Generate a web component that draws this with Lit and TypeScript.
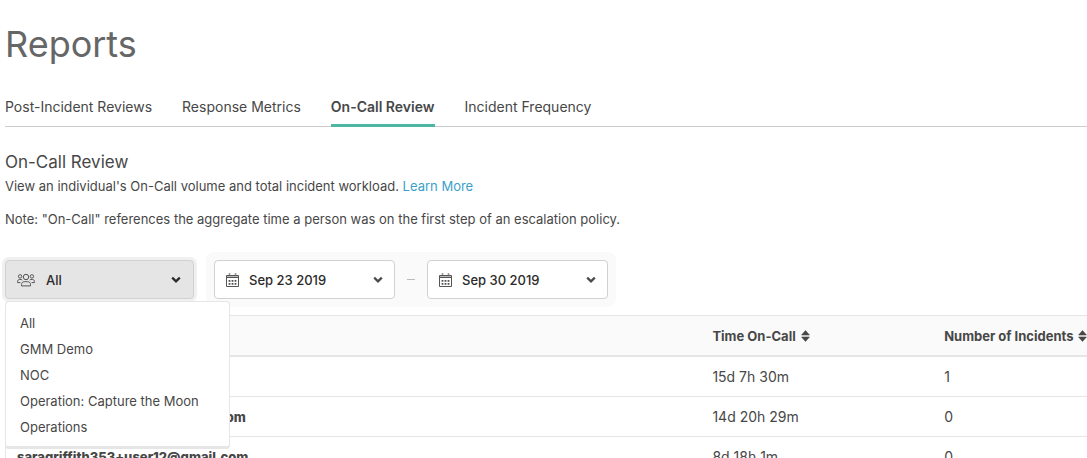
import { LitElement, html, css, svg } from "lit";
import { customElement, property, state } from "lit/decorators.js";
import { classMap } from "lit/directives/class-map.js";

const chevron = html`<svg class="chevron" width="10" height="8" viewBox="0 0 10 8" aria-hidden="true">
  <path d="M1.2 1.6 5 5.4 8.8 1.6" fill="none" stroke="currentColor" stroke-width="2.2" />
</svg>`;

const teamIcon = html`<svg width="18" height="14" viewBox="0 0 18 14" fill="none" stroke="currentColor" aria-hidden="true">
  <circle cx="9" cy="4" r="2.7" />
  <path d="M4.5 12.9v-1.3c0-1.8 1.2-2.9 2.8-2.9h3.4c1.6 0 2.8 1.1 2.8 2.9v1.3z" />
  <circle cx="3.1" cy="3.4" r="1.7" />
  <circle cx="14.9" cy="3.4" r="1.7" />
  <path d="M.6 9.6V8.4c0-1.2.8-1.9 1.9-1.9h1.8l1 .5M.6 9.6h2.8M17.4 9.6V8.4c0-1.2-.8-1.9-1.9-1.9h-1.8l-1 .5M17.4 9.6h-2.8" />
</svg>`;

const dots = [3, 6, 9].flatMap((x) => [7, 10].map((y) => [x, y]));

const calendarIcon = html`<svg width="13" height="14" viewBox="0 0 13 14" aria-hidden="true">
  <path d="M.5 2.5h12v11H.5zM.5 4.5h12" fill="none" stroke="currentColor" />
  <path d="M1 3.5h11" stroke="currentColor" opacity=".4" />
  <path d="M3.5 0v3M9.5 0v3" stroke="currentColor" stroke-width="1.6" opacity=".6" />
  ${dots.map(([x, y]) => svg`<rect x=${x - 0.4} y=${y} width="1.8" height="1.8" fill="currentColor" />`)}
</svg>`;

const sortIcon = html`<svg width="9" height="12" viewBox="0 0 9 12" aria-hidden="true">
  <path d="M4.5.6 8.4 5H.6zM4.5 11.4 8.4 7H.6z" fill="currentColor" stroke="currentColor" stroke-width=".6" stroke-linejoin="round" />
</svg>`;

@customElement("team-picker")
class TeamPicker extends LitElement {
  @property({ type: Array }) teams: string[] = [];
  @state() private selected = "All";
  @state() private open = true;

  static styles = css`
    :host { display: block; position: relative; }
    button { font: inherit; text-align: left; cursor: pointer; }
    .trigger {
      display: flex; align-items: center; box-sizing: border-box;
      width: 189px; height: 39px; padding: 0 12px 0 11px;
      border: 1px solid #d1d1d1; border-radius: 4px;
      background: #e5e5e5; color: #2b2b2b;
      box-shadow: 0 0 0 3px #f0f0f0;
    }
    .trigger svg { flex: none; color: #555; }
    .trigger .chevron { color: #2b2b2b; }
    .value { flex: 1; margin-left: 11px; font-weight: 500; }
    .menu {
      position: absolute; z-index: 2; top: 41px; left: 0;
      box-sizing: border-box; width: 225px; margin: 0; padding: 8px 0 6px;
      list-style: none; background: #fff;
      border: 1px solid #e6e6e6; border-bottom-width: 3px; border-radius: 4px;
    }
    .item {
      display: block; width: 100%; height: 26px; padding: 0 14px;
      border: 0; background: none; color: inherit;
    }
    .item:hover { background: #f5f5f5; }
  `;

  private choose(team: string) {
    this.selected = team;
    this.open = false;
  }

  render() {
    return html`
      <button class="trigger" aria-haspopup="true" aria-expanded=${this.open} aria-label="Team"
        @click=${() => (this.open = !this.open)}>
        ${teamIcon}<span class="value">${this.selected}</span>${chevron}
      </button>
      ${this.open
        ? html`<ul class="menu">
            ${this.teams.map((t) => html`<li><button class="item" @click=${() => this.choose(t)}>${t}</button></li>`)}
          </ul>`
        : null}
    `;
  }
}

@customElement("date-picker")
class DatePicker extends LitElement {
  @property() label = "";
  @property() value = "";

  static styles = css`
    :host { display: block; }
    .field {
      display: grid; grid-template-columns: 34px 1fr 26px; align-items: center;
      box-sizing: border-box; width: 181px; height: 39px;
      border: 1px solid #d1d1d1; border-radius: 4px;
      background: #fff; color: #2b2b2b;
    }
    svg { grid-row: 1; pointer-events: none; color: #555; z-index: 1; }
    svg:first-child { grid-column: 1; margin-left: 11px; }
    .chevron { grid-column: 3; justify-self: start; margin-left: 5px; color: #4a4a4a; }
    select {
      grid-column: 1 / -1; grid-row: 1; height: 37px; width: 100%;
      padding: 0 26px 0 34px; appearance: none; border: 0; border-radius: 4px;
      background: none; color: inherit; font: inherit; font-weight: 500;
    }
  `;

  render() {
    return html`<label class="field">
      ${calendarIcon}
      <select aria-label=${this.label}><option>${this.value}</option></select>
      ${chevron}
    </label>`;
  }
}

@customElement("app-root")
class AppRoot extends LitElement {
  @state() private tab = "On-Call Review";

  private tabs = ["Post-Incident Reviews", "Response Metrics", "On-Call Review", "Incident Frequency"];
  private teams = ["All", "GMM Demo", "NOC", "Operation: Capture the Moon", "Operations"];
  private rows = [
    ["saragriffith353@gmail.com", "15d 7h 30m", "1"],
    ["saragriffith353+user11@gmail.com", "14d 20h 29m", "0"],
    ["saragriffith353+user12@gmail.com", "8d 18h 1m", "0"],
  ];

  static styles = css`
    :host {
      display: block; overflow: hidden; padding-left: 5px;
      background: #fff; color: #474747;
      font: 13px/20px Inter, "Liberation Sans", sans-serif;
    }
    h1 { margin: 0; padding-top: 22px; font-size: 36px; line-height: 44px; font-weight: 400; color: #666; }
    .tabs { display: flex; gap: 30px; margin-top: 31px; border-bottom: 1px solid #ccc; font-size: 14px; }
    .tab { height: 27px; margin-bottom: -1px; border-bottom: 3px solid transparent; color: inherit; text-decoration: none; }
    .tab.active { font-weight: 600; border-color: #4db6a4; }
    h2 { margin: 23px 0 0; font-size: 17px; line-height: 24px; font-weight: 400; }
    p { margin: 2px 0 0; }
    p + p { margin-top: 13px; }
    .link { color: #3ba0c8; text-decoration: none; }
    .filters { display: flex; align-items: center; gap: 12px; margin-top: 23px; }
    .range { display: flex; align-items: center; gap: 12px; padding: 8px; border-radius: 8px; background: #fafafa; }
    .dash { width: 8px; height: 1px; background: #bbb; }
    table { width: 100%; min-width: 1160px; margin-top: 8px; table-layout: fixed; border-collapse: separate; border-spacing: 0; border-left: 1px solid #e6e6e6; }
    th, td { box-sizing: border-box; height: 40px; padding: 0 11px; text-align: left; border-bottom: 1px solid #e6e6e6; }
    thead th { height: 42px; background: #fafafa; border-top: 1px solid #e6e6e6; border-bottom-width: 2px; font-weight: 700; }
    td { font-size: 14px; }
    tbody th { font-weight: 800; }
    .name { width: 60%; }
    .sort { display: inline-flex; align-items: center; gap: 5px; padding: 0; border: 0; background: none; color: inherit; font: inherit; white-space: nowrap; }
  `;

  render() {
    return html`
      <h1>Reports</h1>
      <nav class="tabs">
        ${this.tabs.map((t) => html`<a href="#" class=${classMap({ tab: true, active: t === this.tab })}
          @click=${(e: Event) => { e.preventDefault(); this.tab = t; }}>${t}</a>`)}
      </nav>
      <h2>On-Call Review</h2>
      <p>View an individual's On-Call volume and total incident workload. <a class="link" href="#">Learn More</a></p>
      <p>Note: "On-Call" references the aggregate time a person was on the first step of an escalation policy.</p>
      <div class="filters">
        <team-picker .teams=${this.teams}></team-picker>
        <div class="range">
          <date-picker label="Start date" value="Sep 23 2019"></date-picker>
          <span class="dash"></span>
          <date-picker label="End date" value="Sep 30 2019"></date-picker>
        </div>
      </div>
      <table>
        <thead>
          <tr>
            <th class="name"><button class="sort">User ${sortIcon}</button></th>
            <th><button class="sort">Time On-Call ${sortIcon}</button></th>
            <th><button class="sort">Number of Incidents ${sortIcon}</button></th>
          </tr>
        </thead>
        <tbody>
          ${this.rows.map(([name, time, count]) => html`<tr><th scope="row">${name}</th><td>${time}</td><td>${count}</td></tr>`)}
        </tbody>
      </table>
    `;
  }
}
